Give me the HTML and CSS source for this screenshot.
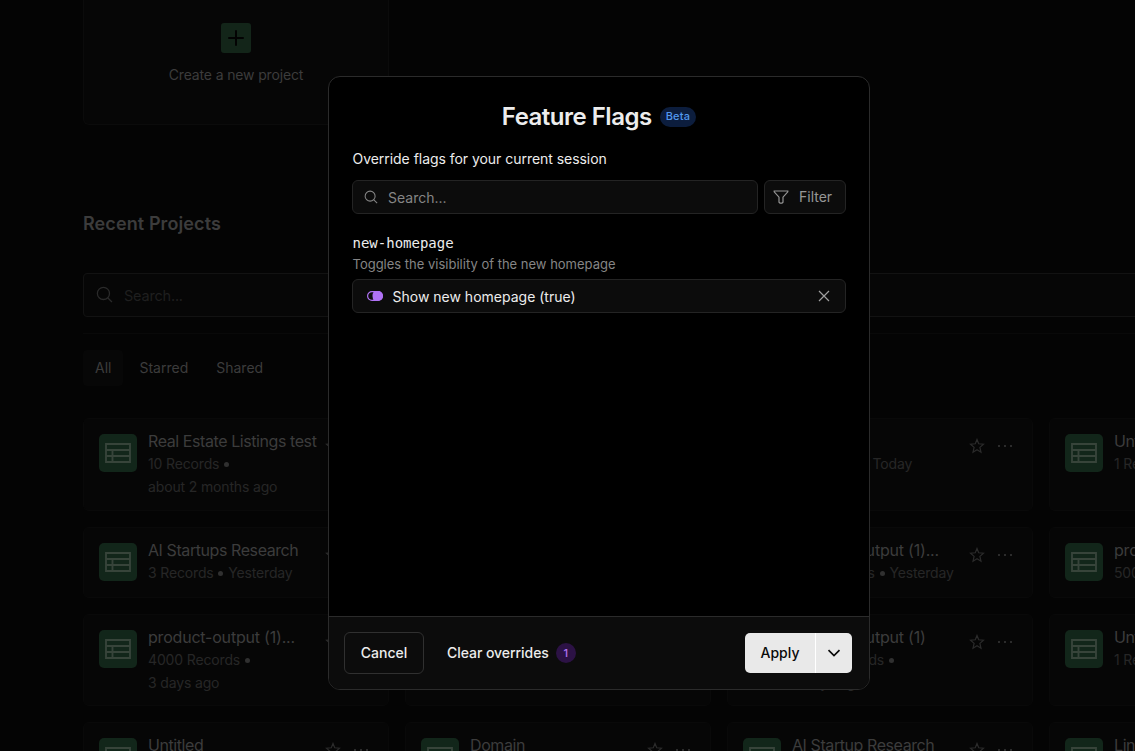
FILE: index.html
```html
<!DOCTYPE html>
<html lang="en">
<head>
    <meta charset="UTF-8">
    <meta name="viewport" content="width=device-width, initial-scale=1.0">
    <title>Feature Flags</title>
    <link rel="stylesheet" href="styles.css">
</head>
<body>
    <!-- Shared icons -->
    <svg class="sprite" width="0" height="0">
        <symbol id="icon-table" viewBox="0 0 26 20">
            <path d="M1 1h24v18H1zM1 7h24M1 13h24M7.500 7v12"/>
        </symbol>
        <symbol id="icon-star" viewBox="0 0 16 16">
            <path d="M8 1.500l1.700 4.300 4.800.4-3.600 3.200 1.100 4.800L8 11.700 4 14.200l1.100-4.800L1.500 6.200l4.800-.4z"/>
        </symbol>
        <symbol id="icon-search" viewBox="0 0 16 16">
            <circle cx="7" cy="7" r="5.700"/>
            <path d="M11 11l4 4"/>
        </symbol>
    </svg>

    <main class="page">
        <div class="create-card">
            <div class="create-icon">
                <svg width="16" height="16" viewBox="0 0 16 16"><path d="M8 1v14M1 8h14"/></svg>
            </div>
            <span class="create-label">Create a new project</span>
        </div>

        <h2>Recent Projects</h2>

        <div class="page-search">
            <svg class="line-icon" width="17" height="17"><use href="#icon-search"/></svg>
            <span>Search...</span>
        </div>

        <div class="tabs">
            <span class="tab active">All</span>
            <span class="tab">Starred</span>
            <span class="tab">Shared</span>
        </div>

        <div class="projects" id="projects"></div>
    </main>

    <div class="modal">
        <div class="modal-body">
            <div class="modal-title">
                <h1>Feature Flags</h1>
                <span class="beta">Beta</span>
            </div>
            <p class="intro">Override flags for your current session</p>
            <div class="toolbar">
                <div class="field search">
                    <svg class="line-icon" width="14" height="14"><use href="#icon-search"/></svg>
                    <span>Search...</span>
                </div>
                <div class="field filter">
                    <svg class="line-icon" width="16" height="14" viewBox="0 0 16 14"><path d="M1.200 1h13.600v.8L10 7.200v5.100l-1 .9H7l-1-.9V7.200L1.200 1.800z"/></svg>
                    <span>Filter</span>
                </div>
            </div>
            <div class="flag-name">new-homepage</div>
            <div class="flag-desc">Toggles the visibility of the new homepage</div>
            <div class="field flag-value">
                <svg width="16" height="10" viewBox="0 0 16 10">
                    <rect x=".6" y=".6" width="14.800" height="8.800" rx="4.400" fill="none" stroke="#b072f5" stroke-width="1.200"/>
                    <path d="M7 0h4a5 5 0 0 1 0 10H7Q5.500 7.500 5.500 5T7 0z" fill="#b072f5"/>
                </svg>
                <span>Show new homepage (true)</span>
                <svg class="line-icon close" width="12" height="12" viewBox="0 0 12 12"><path d="M1 1l10 10M11 1L1 11"/></svg>
            </div>
        </div>
        <div class="modal-footer">
            <button class="cancel">Cancel</button>
            <button class="clear">Clear overrides <span class="count">1</span></button>
            <div class="apply">
                <button class="apply-main">Apply</button>
                <button class="apply-more">
                    <svg width="14" height="8" viewBox="0 0 14 8"><path d="M1.500 1.200L7 6.500l5.500-5.300"/></svg>
                </button>
            </div>
        </div>
    </div>

    <script src="projects.js"></script>
</body>
</html>
```
FILE: styles.css
```css
* {
    box-sizing: border-box;
}
body {
    margin: 0;
    width: 1135px;
    height: 751px;
    overflow: hidden;
    background-color: #040404;
    font-family: Inter, sans-serif;
    position: relative;
}
h1, h2, p {
    margin: 0;
}
button {
    font-family: inherit;
    padding: 0;
    border: none;
    background: none;
}
.sprite {
    position: absolute;
}
svg {
    display: block;
    flex-shrink: 0;
}

/* Dimmed page */
.page {
    height: 751px;
    padding-left: 83px;
    overflow: hidden;
    color: #3c3c3c;
    letter-spacing: -0.2px;
}
.create-card {
    width: 306px;
    height: 125px;
    padding-top: 23px;
    display: flex;
    flex-direction: column;
    align-items: center;
    gap: 12px;
    background-color: #060606;
    border: 1px solid #0b0b0b;
    border-top: none;
    border-radius: 0 0 6px 6px;
}
.create-icon {
    width: 30px;
    height: 30px;
    display: grid;
    place-items: center;
    border-radius: 3px;
    background-color: #132519;
}
.create-icon svg {
    fill: none;
    stroke: #030303;
    stroke-width: 2;
    stroke-linecap: round;
}
.create-label {
    font-size: 14px;
    line-height: 20px;
    letter-spacing: -0.15px;
}
h2 {
    margin-top: 85px;
    font-size: 18px;
    font-weight: 600;
    line-height: 28px;
    letter-spacing: 0.1px;
}
.page-search {
    width: 1100px;
    height: 44px;
    margin-top: 35px;
    padding-left: 12px;
    display: flex;
    align-items: center;
    gap: 11px;
    border: 1px solid #121212;
    border-radius: 4px;
    background-color: #060606;
    color: #1f1f1f;
    font-size: 14.500px;
}
.page-search svg {
    color: #2a2a2a;
    margin-top: -2px;
}
.line-icon {
    fill: none;
    stroke: currentColor;
    stroke-width: 1.200;
}
.tabs {
    display: flex;
    height: 69px;
    margin-top: 16px;
    padding-top: 16px;
    border-top: 1px solid #090909;
    font-size: 14px;
    letter-spacing: 0;
}
.tab {
    height: 36px;
    line-height: 36px;
    padding: 0 12px;
    margin-right: 4px;
}
.tab.active {
    background-color: #070707;
    border-radius: 4px;
}
.projects {
    display: grid;
    grid-template-columns: repeat(4, 306px);
    grid-template-rows: 93px 71px 92px 93px;
    gap: 16px;
    margin-top: 16px;
}
.project {
    display: flex;
    padding: 11px 15px 0;
    background-color: #060606;
    border: 1px solid #090909;
    border-radius: 6px;
}
.project-icon {
    width: 38px;
    height: 38px;
    margin-top: 4px;
    display: grid;
    place-items: center;
    flex-shrink: 0;
    border-radius: 5px;
    background-color: #12261a;
}
.project-icon svg {
    fill: none;
    stroke: #37443a;
    stroke-width: 1.900;
}
.project-text {
    width: 172px;
    margin-left: 11px;
}
.project-title {
    font-size: 16px;
    line-height: 23px;
    letter-spacing: -0.42px;
    white-space: nowrap;
}
.project-title.file {
    letter-spacing: -0.2px;
}
.project-meta {
    color: #262626;
    font-size: 14px;
    line-height: 22.500px;
    letter-spacing: -0.15px;
    white-space: nowrap;
}
.project-meta i {
    display: inline-block;
    width: 5px;
    height: 5px;
    margin: 0 1px;
    border-radius: 50%;
    background-color: #303030;
    vertical-align: 2px;
}
.project-actions {
    display: flex;
    gap: 13px;
    margin: 8px 0 0 5px;
    color: #2b2b2b;
}
.dots {
    display: flex;
    gap: 4px;
    padding-top: 7px;
}
.dots b {
    width: 2px;
    height: 2px;
    background-color: #2b2b2b;
}

/* Feature flags dialog */
.modal {
    position: absolute;
    left: 328px;
    top: 76px;
    width: 542px;
    height: 614px;
    display: flex;
    flex-direction: column;
    overflow: hidden;
    border: 1px solid #2b2b2b;
    border-radius: 12px;
    background-color: #000;
    color: #ededed;
}
.modal-body {
    flex: 1;
    padding: 24px 23px 0;
}
.modal-title {
    display: flex;
    justify-content: center;
    align-items: center;
    gap: 8px;
    height: 32px;
}
h1 {
    font-size: 24px;
    font-weight: 600;
    line-height: 32px;
    letter-spacing: -0.5px;
}
.beta {
    height: 20px;
    padding: 0 6px;
    border-radius: 10px;
    background-color: #0c1d3d;
    color: #5298ee;
    font-size: 11px;
    font-weight: 500;
    line-height: 19px;
    letter-spacing: 0.2px;
}
.intro {
    margin-top: 16px;
    padding-left: 0.5px;
    font-size: 14px;
    line-height: 20px;
    letter-spacing: -0.04px;
}
.toolbar {
    display: flex;
    gap: 6px;
    margin-top: 11px;
}
.field {
    height: 34px;
    display: flex;
    align-items: center;
    border: 1px solid #242424;
    border-radius: 6px;
    background-color: #0c0c0c;
    font-size: 14px;
}
.search {
    flex: 1;
    padding-left: 11px;
    gap: 10px;
    color: #858585;
}
.filter {
    width: 82px;
    padding-left: 8px;
    gap: 10px;
    color: #969696;
}
.filter span {
    padding-bottom: 1px;
}
.flag-name {
    margin-top: 19px;
    padding-left: 0.5px;
    font-family: "DejaVu Sans Mono", monospace;
    font-size: 14px;
    line-height: 20px;
}
.flag-desc {
    margin: 1px 0 5px;
    padding-left: 0.5px;
    color: #858585;
    font-size: 13px;
    line-height: 20px;
}
.flag-value {
    padding: 0 15px 0 14px;
    gap: 9.500px;
}
.close {
    margin-left: auto;
    color: #a0a0a0;
}
.modal-footer {
    height: 73px;
    display: flex;
    align-items: center;
    padding: 0 17px 0 15px;
    border-top: 1px solid #2b2b2b;
    background-color: #0c0c0c;
}
.modal-footer button {
    padding-bottom: 1px;
    color: #ededed;
    font-size: 14px;
    font-weight: 500;
}
.modal-footer .cancel {
    width: 80px;
    height: 42px;
    border: 1px solid #303030;
    border-radius: 6px;
}
.clear {
    display: flex;
    align-items: center;
    gap: 7px;
    margin-left: 23px;
    letter-spacing: -0.05px;
}
.count {
    width: 20px;
    height: 20px;
    margin-top: 1px;
    border-radius: 50%;
    background-color: #2c1245;
    color: #b072f5;
    font-size: 11px;
    line-height: 20px;
    text-align: center;
}
.apply {
    display: flex;
    height: 40px;
    margin-left: auto;
    overflow: hidden;
    border-radius: 5px;
    background-color: #e9e9e9;
}
.modal-footer .apply-main {
    width: 70px;
    color: #0a0a0a;
}
.modal-footer .apply-more {
    width: 37px;
    display: grid;
    place-items: center;
    border-left: 1px solid #fff;
}
.apply-more svg {
    fill: none;
    stroke: #0a0a0a;
    stroke-width: 1.700;
}
```
FILE: projects.js
```javascript
const projects = [
    { title: 'Real Estate Listings test', records: '10 Records', date: 'about 2 months ago', wrap: true },
    { title: 'Untitled', records: '1 Records', date: 'Today' },
    { title: 'Untitled', records: '4 Records', date: 'Today' },
    { title: 'Untitled', records: '1 Records', date: 'Today' },
    { title: 'AI Startups Research', records: '3 Records', date: 'Yesterday' },
    { title: 'Untitled', records: '3 Records', date: 'Yesterday' },
    { title: 'product-output (1)...', records: '500 Records', date: 'Yesterday' },
    { title: 'product-output', records: '500 Records', date: 'Yesterday' },
    { title: 'product-output (1)...', records: '4000 Records', date: '3 days ago', wrap: true },
    { title: 'Untitled', records: '1 Records', date: 'Today' },
    { title: 'product-output (1)', records: '4000 Records', date: '3 days ago', wrap: true },
    { title: 'Untitled', records: '1 Records', date: 'Today' },
    { title: 'Untitled', records: '1 Records', date: 'Today' },
    { title: 'Domain', records: '1 Records', date: 'Today' },
    { title: 'AI Startup Research', records: '3 Records', date: 'Today' },
    { title: 'LinkedIn', records: '1 Records', date: 'Today' }
];

document.getElementById('projects').innerHTML = projects.map(p => `
    <div class="project">
        <div class="project-icon"><svg width="26" height="20"><use href="#icon-table"/></svg></div>
        <div class="project-text">
            <div class="project-title${p.title.startsWith('product') ? ' file' : ''}">${p.title}</div>
            <div class="project-meta">${p.records} <i></i>${p.wrap ? '<br>' : ' '}${p.date}</div>
        </div>
        <div class="project-actions">
            <svg class="line-icon" width="16" height="16"><use href="#icon-star"/></svg>
            <div class="dots"><b></b><b></b><b></b></div>
        </div>
    </div>
`).join('');
```
